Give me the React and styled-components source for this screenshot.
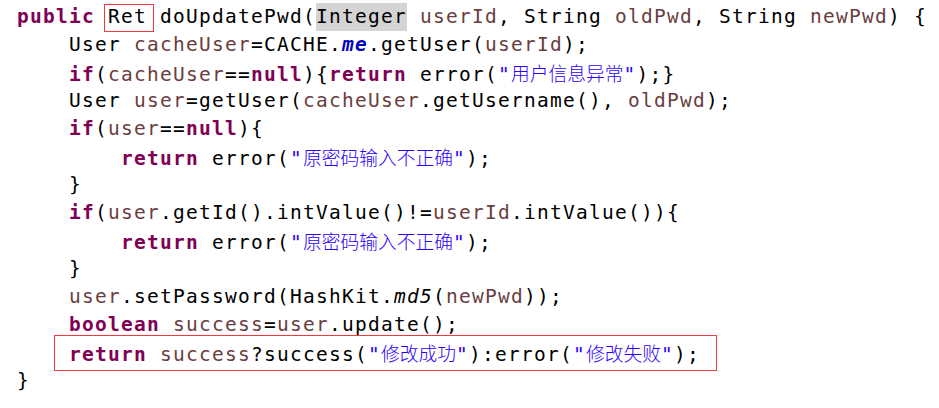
import React from "react";
import styled, { createGlobalStyle } from "styled-components";

const GlobalStyle = createGlobalStyle`
  html, body {
    margin: 0;
    padding: 0;
    background: #ffffff;
  }
`;

const Editor = styled.div`
  width: 939px;
  height: 408px;
  box-sizing: border-box;
  padding: 3px 0 0 17px;
  background: #ffffff;
  color: #000000;
  font-family: "DejaVu Sans Mono", "Liberation Mono", monospace;
  font-size: 19.5px;
  letter-spacing: 1.26px;
  overflow: hidden;
`;

const Line = styled.div`
  height: 28px;
  line-height: 28px;
  white-space: pre;
  padding-left: ${(props) => props.indent * 13}px;
`;

const Kw = styled.span`
  color: #7f0055;
  font-weight: bold;
`;

const Var = styled.span`
  color: #6a3e3e;
`;

const Str = styled.span`
  color: #2a00ff;
`;

const Cjk = styled.span`
  font-family: "Noto Sans CJK SC", sans-serif;
  font-size: 18.75px;
  font-weight: 300;
  letter-spacing: 0;
`;

const Field = styled.span`
  color: #0000c0;
  font-weight: bold;
  font-style: italic;
`;

const Italic = styled.span`
  font-style: italic;
`;

const Highlight = styled.span`
  display: inline-block;
  height: 28px;
  background: #d4d4d4;
`;

// red annotation frame drawn over the code
const Boxed = styled.span`
  position: relative;
  display: inline-block;
  height: 28px;
  &::after {
    content: "";
    position: absolute;
    top: ${(p) => p.t}px;
    bottom: ${(p) => p.b}px;
    left: ${(p) => p.l}px;
    right: ${(p) => p.r}px;
    border: 1px solid #f03a3f;
    pointer-events: none;
  }
`;

const S = ({ children }) => (
  <Str>
    "<Cjk>{children}</Cjk>"
  </Str>
);

const App = () => {
  return (
    <>
      <GlobalStyle />
      <Editor>
        <Line indent={0}>
          <Kw>public</Kw>{" "}
          <Boxed t={1} b={-1} l={-4} r={-7}>Ret</Boxed> doUpdatePwd(
          <Highlight>Integer</Highlight> <Var>userId</Var>, String{" "}
          <Var>oldPwd</Var>, String <Var>newPwd</Var>) {"{"}
        </Line>
        <Line indent={4}>
          User <Var>cacheUser</Var>=CACHE.<Field>me</Field>.getUser(
          <Var>userId</Var>);
        </Line>
        <Line indent={4}>
          <Kw>if</Kw>(<Var>cacheUser</Var>==<Kw>null</Kw>){"{"}
          <Kw>return</Kw> error(<S>用户信息异常</S>);{"}"}
        </Line>
        <Line indent={4}>
          User <Var>user</Var>=getUser(<Var>cacheUser</Var>.getUsername(),{" "}
          <Var>oldPwd</Var>);
        </Line>
        <Line indent={4}>
          <Kw>if</Kw>(<Var>user</Var>==<Kw>null</Kw>){"{"}
        </Line>
        <Line indent={8}>
          <Kw>return</Kw> error(<S>原密码输入不正确</S>);
        </Line>
        <Line indent={4}>{"}"}</Line>
        <Line indent={4}>
          <Kw>if</Kw>(<Var>user</Var>.getId().intValue()!=<Var>userId</Var>
          .intValue()){"{"}
        </Line>
        <Line indent={8}>
          <Kw>return</Kw> error(<S>原密码输入不正确</S>);
        </Line>
        <Line indent={4}>{"}"}</Line>
        <Line indent={4}>
          <Var>user</Var>.setPassword(HashKit.<Italic>md5</Italic>(
          <Var>newPwd</Var>));
        </Line>
        <Line indent={4}>
          <Kw>boolean</Kw> <Var>success</Var>=<Var>user</Var>.update();
        </Line>
        <Line indent={4}>
          <Boxed t={-4} b={-4} l={-15} r={-17}>
            <Kw>return</Kw> <Var>success</Var>?success(<S>修改成功</S>
            ):error(<S>修改失败</S>);
          </Boxed>
        </Line>
        <Line indent={0}>{"}"}</Line>
      </Editor>
    </>
  );
};

export default App;
